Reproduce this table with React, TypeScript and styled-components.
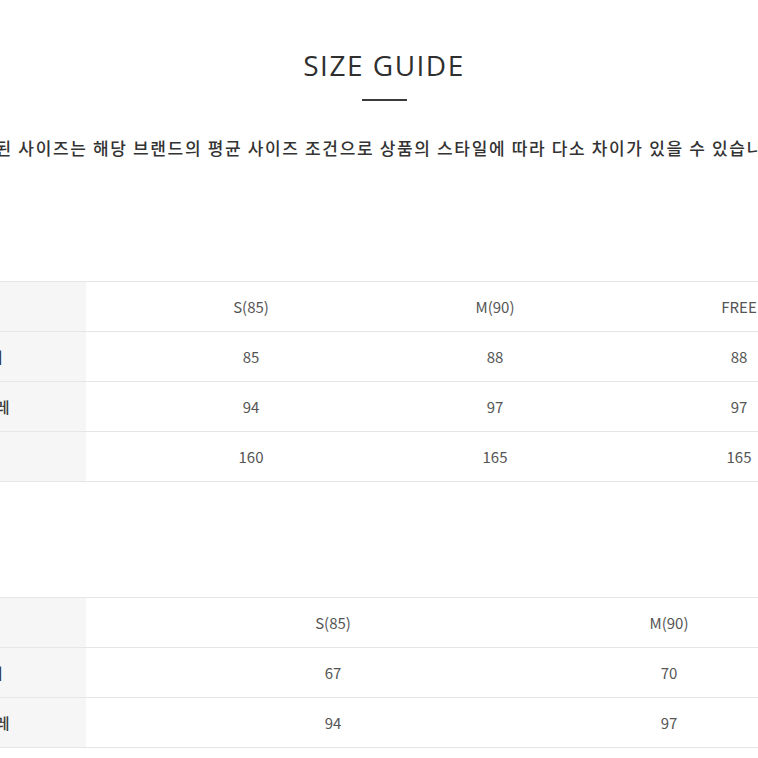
import React from "react";
import styled, { createGlobalStyle } from "styled-components";

const GlobalStyle = createGlobalStyle`
  html, body {
    margin: 0;
    padding: 0;
    background: #ffffff;
    overflow: hidden;
  }
  * { box-sizing: border-box; }
`;

const Page = styled.div`
  width: 758px;
  height: 758px;
  overflow: hidden;
  background: #fff;
  padding-top: 51px;
  font-family: "Noto Sans CJK KR", "Noto Sans", sans-serif;
`;

const Title = styled.h2`
  margin: 0;
  padding-left: 10px;
  font-family: "Open Sans", "Liberation Sans", sans-serif;
  font-weight: 400;
  font-size: 28px;
  line-height: 28px;
  letter-spacing: 1.5px;
  color: #2f2f2f;
  text-align: center;
`;

const Rule = styled.div`
  width: 45px;
  height: 2px;
  background: #3a3a3a;
  margin: 20px auto 0;
  transform: translateX(5px);
`;

const Intro = styled.p`
  margin: 35px 0 0 -39px;
  width: 810px;
  white-space: nowrap;
  font-size: 17px;
  line-height: 24px;
  letter-spacing: 1.65px;
  font-weight: 500;
  color: #333;
  text-align: center;
`;

const TableWrap = styled.div<{ $gap: number }>`
  margin-top: ${(p) => p.$gap}px;
  margin-left: -122px;
  border-top: 1px solid #e6e6e6;
  width: 1100px;
`;

const Row = styled.div<{ $cols: string }>`
  display: grid;
  grid-template-columns: ${(p) => p.$cols};
  height: 50px;
  border-bottom: 1px solid #e6e6e6;
`;

const LabelCell = styled.div`
  display: flex;
  align-items: center;
  justify-content: center;
  background: #f6f6f6;
  font-size: 15px;
  font-weight: 500;
  color: #3a3a3a;
  white-space: nowrap;
`;

const Cell = styled.div`
  display: flex;
  align-items: center;
  justify-content: center;
  font-size: 15px;
  color: #555;
  white-space: nowrap;
`;

type TableData = {
  cols: string;
  head: string[];
  rows: { label: string; values: string[] }[];
};

const tables: (TableData & { gap: number })[] = [
  {
    gap: 121,
    cols: "208px 330px 158px 330px",
    head: ["S(85)", "M(90)", "FREE"],
    rows: [
      { label: "총길이", values: ["85", "88", "88"] },
      { label: "가슴둘레", values: ["94", "97", "97"] },
      { label: "키", values: ["160", "165", "165"] },
    ],
  },
  {
    gap: 115,
    cols: "208px 494px 178px",
    head: ["S(85)", "M(90)"],
    rows: [
      { label: "총길이", values: ["67", "70"] },
      { label: "가슴둘레", values: ["94", "97"] },
    ],
  },
];

function SizeTable({ data, gap }: { data: TableData; gap: number }) {
  return (
    <TableWrap $gap={gap}>
      <Row $cols={data.cols}>
        <LabelCell />
        {data.head.map((h) => (
          <Cell key={h}>{h}</Cell>
        ))}
      </Row>
      {data.rows.map((r) => (
        <Row $cols={data.cols} key={r.label}>
          <LabelCell>{r.label}</LabelCell>
          {r.values.map((v, i) => (
            <Cell key={i}>{v}</Cell>
          ))}
        </Row>
      ))}
    </TableWrap>
  );
}

export default function App() {
  return (
    <>
      <GlobalStyle />
      <Page>
        <Title>SIZE GUIDE</Title>
        <Rule />
        <Intro>
          표기된 사이즈는 해당 브랜드의 평균 사이즈 조건으로 상품의 스타일에 따라 다소 차이가 있을 수 있습니다.
        </Intro>
        {tables.map((t, i) => (
          <SizeTable key={i} data={t} gap={t.gap} />
        ))}
      </Page>
    </>
  );
}
